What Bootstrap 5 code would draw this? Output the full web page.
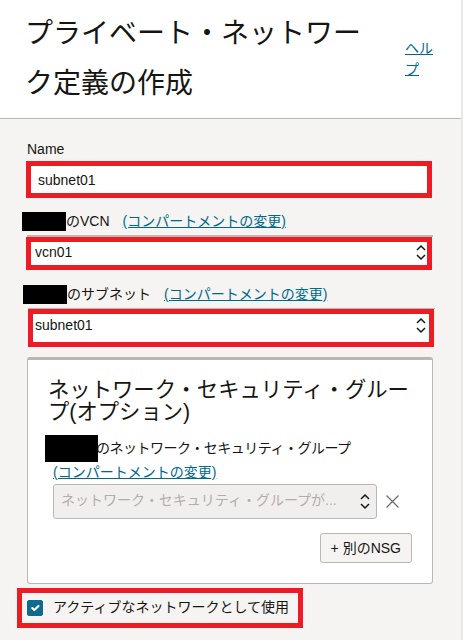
<!DOCTYPE html>
<html lang="ja">
<head>
  <meta charset="UTF-8">
  <meta name="viewport" content="width=device-width, initial-scale=1">
  <title>プライベート・ネットワーク定義の作成</title>
  <link href="https://cdn.jsdelivr.net/npm/bootstrap@5.3.0/dist/css/bootstrap.min.css" rel="stylesheet">
  <style>
    html, body { height: 100%; }
    body {
      font-family: "Liberation Sans", "Noto Sans CJK JP", sans-serif;
      font-size: 14px;
      line-height: 21px;
      color: #161513;
      background: #f5f4f2;
      border-right: 2px solid #e8e8e8;
      overflow: hidden;
    }
    a { color: #00688c; }
    .page-head {
      height: 119px;
      padding: 9px 0 0 25px;
      background: #fff;
      border-bottom: 1px solid #bcb6b1;
    }
    .page-title {
      width: 350px;
      margin: 0;
      font-size: 28px;
      font-weight: 400;
      line-height: 50px;
    }
    .help-link { width: 30px; margin: 29px 0 0 30px; }
    .page-body { padding: 20px 28px 0 27px; }
    .field-label { margin: 0 0 1px; line-height: 21px; }
    .hidden-name { display: inline-block; position: relative; background: #000; vertical-align: middle; }
    .red-input.form-control, .red-select.form-select {
      display: block;
      font-size: 14px;
      line-height: 21px;
      color: #161513;
      border: 5px solid #ed1c24;
      border-radius: 0;
      box-shadow: none;
    }
    .red-input.form-control { width: 406px; height: 37px; margin-left: -1px; padding: 2px 7px 2px 7px; }
    .select-wrap { border-top: 2px solid #bcb6b1; }
    .red-select.form-select {
      background-image: url("data:image/svg+xml,%3Csvg xmlns='http://www.w3.org/2000/svg' width='10' height='17' viewBox='0 0 10 17' fill='none' stroke='%23161513' stroke-width='1.5'%3E%3Cpath d='M1 6l4-4 4 4M1 11l4 4 4-4'/%3E%3C/svg%3E");
      background-size: 10px 17px;
    }
    .vcn-row { margin-top: 13px; margin-left: -5px; display: flex; align-items: center; height: 21px; }
    .vcn-wrap { margin-top: 3px; }
    .vcn-select.form-select {
      width: 406px; height: 33px; margin-left: -1px;
      padding: 0 30px 3px 4px;
      background-position: right 1px top 2px;
    }
    .subnet-row { margin-top: 14px; margin-left: -4px; display: flex; align-items: center; height: 21px; }
    .subnet-wrap { margin-top: 3px; margin-left: 1px; margin-right: -2px; border-top-width: 1px; }
    .subnet-select.form-select {
      width: 406px; height: 38px;
      padding: 0 30px 6px 2px;
      background-position: right 3px top 3px;
    }
    .link-gap-a { margin-left: 13px; }
    .link-gap-b { margin-left: 13px; }
    .group-box.card {
      height: 227px;
      margin-top: 10px;
      padding: 19px 20px 0 20px;
      background: #fff;
      border: 1px solid #bcb6b1;
      border-top-width: 3px;
      border-radius: 3px;
      --bs-card-bg: #fff;
    }
    .group-title { margin: 0; font-size: 21.33px; font-weight: 400; line-height: 22px; }
    .group-label { margin: 12px 0 0 -3px; height: 27px; display: flex; align-items: center; letter-spacing: -.5px; }
    .group-label .hidden-name { flex: none; margin-right: -2px; z-index: 1; }
    .group-link { margin: 0 0 0 5px; line-height: 21px; }
    .group-select-row { margin: 1px 0 0 5px; }
    .group-select.form-select {
      width: 324px; height: 35px;
      padding: 0 30px 2px 7px;
      font-size: 14px;
      color: #b3ada8;
      background-color: #f1efed;
      border: 1px solid #bcb6b1;
      border-radius: 3px;
      background-image: url("data:image/svg+xml,%3Csvg xmlns='http://www.w3.org/2000/svg' width='10' height='17' viewBox='0 0 10 17' fill='none' stroke='%23161513' stroke-width='1.5'%3E%3Cpath d='M1 6l4-4 4 4M1 11l4 4 4-4'/%3E%3C/svg%3E");
      background-size: 10px 17px;
      background-position: right 6px center;
      opacity: 1;
    }
    .clear-x { flex: none; margin-left: 8px; }
    .add-nsg.btn {
      height: 30px; margin-top: 14px; padding: 0 10px;
      font-size: 14px; color: #161513; line-height: 28px;
      background: #f5f4f2;
      border: 1px solid #bcb6b1;
      border-radius: 3px;
    }
    .active-check {
      width: 286px; height: 40px;
      margin: 4px 0 0 -10px;
      border: 5px solid #ed1c24;
    }
    .active-check .form-check-input {
      flex: none;
      width: 16px; height: 16px;
      margin: -1px 10px 0 5px;
      background-color: #0f6a8e;
      border-color: #0f6a8e;
      border-radius: 2px;
    }
    .active-check label { margin-top: -1px; }
  </style>
</head>
<body>

  <!-- Header -->
  <header class="page-head d-flex">
    <h1 class="page-title">プライベート・ネットワーク定義の作成</h1>
    <a class="help-link" href="#">ヘルプ</a>
  </header>

  <main class="page-body">
    <!-- Name -->
    <label class="field-label d-block" for="nameInput">Name</label>
    <input id="nameInput" class="form-control red-input" type="text" value="subnet01">

    <!-- VCN -->
    <div class="vcn-row">
      <span class="hidden-name" style="width:44px;height:19px"></span><span>のVCN</span>
      <a class="link-gap-a" href="#">(コンパートメントの変更)</a>
    </div>
    <div class="select-wrap vcn-wrap">
      <select class="form-select red-select vcn-select"><option>vcn01</option></select>
    </div>

    <!-- Subnet -->
    <div class="subnet-row">
      <span class="hidden-name" style="width:44px;height:19px"></span><span>のサブネット</span>
      <a class="link-gap-b" href="#">(コンパートメントの変更)</a>
    </div>
    <div class="select-wrap subnet-wrap">
      <select class="form-select red-select subnet-select"><option>subnet01</option></select>
    </div>

    <!-- Network security group -->
    <div class="card group-box">
      <h2 class="group-title">ネットワーク・セキュリティ・グループ(オプション)</h2>
      <div class="group-label">
        <span class="hidden-name" style="width:53px;height:27px"></span><span>のネットワーク・セキュリティ・グループ</span>
      </div>
      <div class="group-link"><a href="#">(コンパートメントの変更)</a></div>
      <div class="group-select-row d-flex align-items-center">
        <select class="form-select group-select" disabled><option>ネットワーク・セキュリティ・グループが...</option></select>
        <svg class="clear-x" width="15" height="15" viewBox="0 0 15 15" fill="none" stroke="#6f6b67" stroke-width="1.2"><path d="M1.5 1.5l12 12M13.5 1.5l-12 12"/></svg>
      </div>
      <div class="d-flex justify-content-end">
        <button class="btn add-nsg" type="button">+ 別のNSG</button>
      </div>
    </div>

    <!-- Active network -->
    <div class="active-check d-flex align-items-center">
      <input id="activeCheck" class="form-check-input" type="checkbox" checked>
      <label for="activeCheck">アクティブなネットワークとして使用</label>
    </div>
  </main>

  <script src="https://cdn.jsdelivr.net/npm/bootstrap@5.3.0/dist/js/bootstrap.bundle.min.js"></script>
</body>
</html>
